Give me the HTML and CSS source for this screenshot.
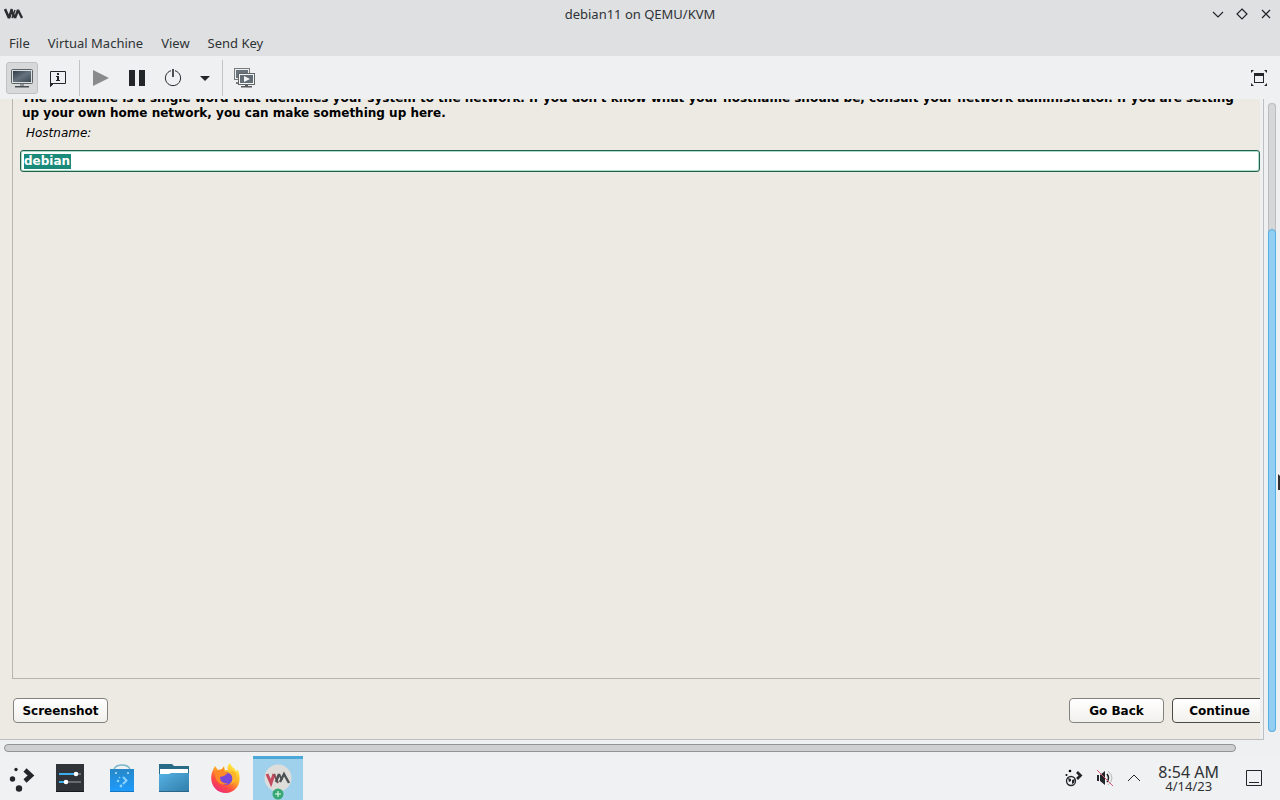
FILE: index.html
```html
<!DOCTYPE html>
<html lang="en">
<head>
<meta charset="utf-8">
<title>debian11 on QEMU/KVM</title>
<link rel="stylesheet" href="styles.css">
</head>
<body>
<header class="titlebar">
  <svg class="app-mark" width="20" height="12" viewBox="0 0 20 12" fill="none" stroke="#2b2e31" stroke-linejoin="bevel"><path d="M1 1l4 9 3-9" stroke-width="2.600"/><path d="M7 2l4 8M11 10l3-8 4 8" stroke-width="2.400"/><path d="M8 10l3-8" stroke-width="1.500"/></svg>
  <h1 class="title">debian11 on QEMU/KVM</h1>
  <div class="window-controls">
    <button class="plain" aria-label="Minimize"><svg width="12" height="12" viewBox="0 0 12 12"><path d="M1 4l5 5 5-5"/></svg></button>
    <button class="plain" aria-label="Maximize"><svg width="12" height="12" viewBox="0 0 12 12"><path d="M6 1l5 5-5 5-5-5z"/></svg></button>
    <button class="plain" aria-label="Close"><svg width="12" height="12" viewBox="0 0 12 12"><path d="M2 2l8 8M10 2l-8 8"/></svg></button>
  </div>
</header>
<nav class="menubar">
  <button class="plain">File</button>
  <button class="plain">Virtual Machine</button>
  <button class="plain">View</button>
  <button class="plain">Send Key</button>
</nav>
<div class="toolbar">
  <button class="tool active" aria-label="Console">
    <svg width="24" height="24" viewBox="0 0 24 24"><defs><linearGradient id="scr" x1="0" y1="0" x2="1" y2="1"><stop offset="0" stop-color="#303c48"/><stop offset=".5" stop-color="#66727e"/><stop offset="1" stop-color="#3c4a56"/></linearGradient></defs><rect x="1.500" y="3.500" width="21" height="14" rx="1" fill="#dde0e1" stroke="#5d6265"/><rect x="3" y="5" width="18" height="11" fill="url(#scr)"/><path d="M10 18h4v2h-4z" fill="#90969a"/><path d="M5 20h14v1.500H5z" fill="#4b5054"/></svg>
  </button>
  <button class="tool" aria-label="Details">
    <svg width="24" height="24" viewBox="0 0 24 24"><path d="M4.500 5.500h15v12h-12l-3 3z" fill="none" stroke="#232629"/><path d="M4 17h4l-4 4z" fill="#232629"/><path d="M11 7h2v2h-2zM10 10h3v4h1v1h-4v-1h1v-3h-1z" fill="#232629"/></svg>
  </button>
  <span class="divider"></span>
  <button class="tool" aria-label="Run"><svg width="24" height="24" viewBox="0 0 24 24"><path d="M4 4l16 8-16 8z" fill="#888a8c"/></svg></button>
  <button class="tool" aria-label="Pause"><svg width="24" height="24" viewBox="0 0 24 24"><path d="M4 4h6v16H4zM14 4h6v16h-6z" fill="#232629"/></svg></button>
  <button class="tool" aria-label="Shut down"><svg width="24" height="24" viewBox="0 0 24 24" fill="none" stroke="#232629"><path d="M10 4.700a7.600 7.600 0 1 0 4 0"/><path d="M12 3v8" stroke-width="1.600"/></svg></button>
  <button class="tool narrow" aria-label="Shut down options"><svg width="24" height="24" viewBox="0 0 24 24"><path d="M7 10h10l-5 5z" fill="#232629"/></svg></button>
  <span class="divider"></span>
  <button class="tool" aria-label="Snapshots">
    <svg width="24" height="24" viewBox="0 0 24 24"><rect x="2.500" y="2.500" width="15" height="11" fill="#eee" stroke="#777b7e"/><path d="M4 4h12v8H4z" fill="#69737b"/><path d="M4 16h5v2H4z" fill="#777"/><rect x="6.500" y="7.500" width="16" height="11" fill="#f4f4f4" stroke="#606568"/><path d="M8 9h13v8H8z" fill="#626d75"/><path d="M12 10l6 3-6 3z" fill="#f4f4f4"/><path d="M13 19h3v1h4v1.500H9V20h4z" fill="#55595c"/></svg>
  </button>
  <button class="tool fullscreen" aria-label="Full screen">
    <svg width="16" height="16" viewBox="0 0 16 16"><path d="M0 0h3L0 3zM13 0h3v3zM0 13v3h3zM16 13v3h-3zM3 3h10v10H3zM4 6v6h8V6z" fill="#232629" fill-rule="evenodd"/></svg>
  </button>
</div>
<main class="viewer">
  <section class="display">
    <form class="guest">
      <div class="question">
        <p class="description">The hostname is a single word that identifies your system to the network. If you don't know what your hostname should be, consult your network administrator. If you are setting up your own home network, you can make something up here.</p>
        <label class="field-label" for="hostname">Hostname:</label>
        <div class="entry"><input id="hostname" type="text" value="debian" size="5" autocomplete="off"></div>
      </div>
      <div class="actions">
        <button type="button" class="gtk-button">Screenshot</button>
        <button type="button" class="gtk-button back">Go Back</button>
        <button type="button" class="gtk-button default">Continue</button>
      </div>
    </form>
  </section>
  <div class="scroll-v"><div class="track"><div class="thumb"></div></div></div>
  <div class="scroll-h"><div class="thumb-h"></div></div>
  <svg class="pointer" width="2" height="16" viewBox="0 0 2 16"><path d="M0 0l2 2v14H0z" fill="#303030"/></svg>
</main>
<footer class="taskbar">
  <button class="launcher" aria-label="Application launcher"><svg width="32" height="32" viewBox="0 0 32 32" fill="#232629"><circle cx="10" cy="7.500" r="1.700"/><circle cx="6.500" cy="17" r="2.700"/><circle cx="13" cy="26.500" r="3.200"/><path d="M19 8l6 5.500-6 5.500" fill="none" stroke="#232629" stroke-width="4.500"/></svg></button>
  <button class="launcher" aria-label="System settings"><svg width="32" height="32" viewBox="0 0 32 32"><path d="M2 2h28v28H2z" fill="#303438"/><path d="M2 29h28v1H2z" fill="#17191b"/><path d="M5 12h22M5 20h22" stroke="#686c70" stroke-width="2"/><path d="M5 12h17M5 20h7" stroke="#3daee9" stroke-width="2"/><circle cx="22" cy="12" r="2.300" fill="#fff"/><circle cx="12" cy="20" r="2.300" fill="#fff"/></svg></button>
  <button class="launcher" aria-label="Software center"><svg width="32" height="32" viewBox="0 0 32 32"><defs><linearGradient id="bag" x1="0" y1="0" x2="0" y2="1"><stop offset="0" stop-color="#2688c8"/><stop offset="1" stop-color="#1d9cff"/></linearGradient></defs><path d="M4 7h24v23H4z" fill="url(#bag)"/><path d="M8 7q2-4 8-4t8 4" fill="none" stroke="#7bb7c9" stroke-width="1.500"/><circle cx="10" cy="11" r="1" fill="#b9e2ff"/><circle cx="22" cy="11" r="1" fill="#b9e2ff"/><g fill="#8bd3ff"><circle cx="13.500" cy="15.500" r=".8"/><circle cx="12" cy="19" r="1.300"/><circle cx="15" cy="24" r="1.400"/><path d="M17 15l3.500 3.500L17 22" fill="none" stroke="#8bd3ff" stroke-width="2"/></g><path d="M4 29h24v1H4z" fill="#1677bf"/></svg></button>
  <button class="launcher" aria-label="File manager"><svg width="32" height="32" viewBox="0 0 32 32"><defs><linearGradient id="fold" x1="0" y1="0" x2="1" y2="1"><stop offset="0" stop-color="#55b2e5"/><stop offset="1" stop-color="#317da8"/></linearGradient></defs><path d="M1 2h13l2 2h15v13H1z" fill="#286b87"/><path d="M2 7h28v9H2z" fill="#fff"/><path d="M1 12h10l2-1h18v19H1z" fill="url(#fold)"/><path d="M1 29h30v1H1z" fill="#2b6688"/></svg></button>
  <button class="launcher" aria-label="Firefox"><svg width="32" height="32" viewBox="0 0 32 32"><defs><linearGradient id="fox" x1=".85" y1=".1" x2=".25" y2="1"><stop offset="0" stop-color="#fff044"/><stop offset=".4" stop-color="#ffab25"/><stop offset=".7" stop-color="#ff4b42"/><stop offset="1" stop-color="#e92980"/></linearGradient></defs><path d="M3 8l2-4 3 4 4-1 2-3 1 4h3c-1-3 0-5 2-7 1 4 5 5 6 8l2-1c5 13-2 23-12 23C4 31-2 19 3 8z" fill="url(#fox)"/><circle cx="16" cy="16.500" r="6.500" fill="#7848d9"/><path d="M5 9l6-1 3-3v4l4 2-4 3-4 1c0 5 4 7 8 6-8 5-14-3-13-12z" fill="#ff8829"/><path d="M17 11c7 0 7 8 3 11 9-2 8-10 3-13" fill="#ffb52b"/></svg></button>
  <button class="launcher running" aria-label="Virtual Machine Manager">
    <svg width="32" height="32" viewBox="0 0 32 32"><circle cx="16" cy="16" r="13.500" fill="#deddda"/><g fill="none"><path d="M5 12l4 9 3-9" stroke="#c54b60" stroke-width="3"/><path d="M12 12l4 9" stroke="#8b4b54" stroke-width="2"/><path d="M14 20l3-8M18 20l4-8 5 9" stroke="#4d5052" stroke-width="2.400"/><path d="M17 12l3 6" stroke="#4d5052" stroke-width="2"/></g></svg>
    <svg class="badge" width="12" height="12" viewBox="0 0 12 12"><circle cx="6" cy="6" r="5.500" fill="#37a873"/><path d="M6 3v6M3 6h6" stroke="#eafff3"/></svg>
  </button>
  <div class="tray">
    <button class="plain" aria-label="Keyboard and desktop"><svg width="18" height="18" viewBox="0 0 18 18"><circle cx="6" cy="12" r="4.500" fill="none" stroke="#232629" stroke-width="1.300"/><path d="M3 9l3 1v2l-2 1zM7 11l3-1-1 4-2 1z" fill="#232629"/><circle cx="5" cy="2" r="1.300"/><circle cx="1.500" cy="6" r="1"/><path d="M12 3l3.500 3.500L12 10" fill="none" stroke="#232629" stroke-width="2.800"/></svg></button>
    <button class="plain" aria-label="Muted"><svg width="18" height="18" viewBox="0 0 18 18"><path d="M1 6h2v6H1zM4 6l5-4v14l-5-4z" fill="#232629"/><path d="M11 5q3 4 0 8" fill="none" stroke="#232629" stroke-width="1.500"/><path d="M12 2q8 7 0 14" fill="none" stroke="#b5b8ba"/><path d="M1 1l16 16" stroke="#d25870"/></svg></button>
    <button class="plain" aria-label="Show hidden icons"><svg width="14" height="14" viewBox="0 0 14 14"><path d="M1 10l6-6 6 6" fill="none" stroke="#232629"/></svg></button>
    <div class="clock"><time class="time">8:54 AM</time><time class="date">4/14/23</time></div>
    <button class="plain" aria-label="Show desktop"><svg width="18" height="18" viewBox="0 0 18 18"><path d="M1.500 1.500h15v15h-15zM4 13.500h10" fill="none" stroke="#232629"/></svg></button>
  </div>
</footer>
</body>
</html>
```
FILE: styles.css
```css
* { box-sizing: border-box; }

body {
  margin: 0;
  height: 100vh;
  display: flex;
  flex-direction: column;
  overflow: hidden;
  background: #eff0f1;
  color: #2f3235;
  font: 13px/20px "Noto Sans", sans-serif;
}

button { font: inherit; color: inherit; cursor: pointer; }
svg { display: block; flex: none; }
.plain { border: 0; padding: 0; background: none; }

.titlebar {
  display: grid;
  grid-template-columns: 1fr auto 1fr;
  align-items: center;
  height: 28px;
  padding: 0 8px;
  background: #dee0e2;
}
.app-mark { margin-left: -4px; }
.title { margin: 0; font-size: 13px; font-weight: 400; }
.window-controls { display: flex; justify-content: flex-end; gap: 12px; }
.window-controls svg { fill: none; stroke: #232629; stroke-width: 1.2; }

.menubar {
  display: flex;
  align-items: center;
  gap: 18px;
  height: 28px;
  padding: 2px 9px 0;
  background: #dee0e2;
}

.toolbar {
  display: flex;
  align-items: center;
  gap: 4px;
  height: 43px;
  padding: 0 5px 0 6px;
  background: #eff0f2;
}
.tool {
  display: flex;
  align-items: center;
  justify-content: center;
  width: 32px;
  height: 32px;
  padding: 0;
  border: 1px solid transparent;
  border-radius: 3px;
  background: none;
}
.tool.active { background: #d6d8da; border-color: #bfc1c3; }
.tool.narrow { width: 24px; }
.divider { width: 1px; height: 36px; margin: 0 1px; background: #c1c3c5; }
.fullscreen { margin-left: auto; }

.viewer {
  position: relative;
  flex: 1;
  min-height: 0;
  display: grid;
  grid-template-columns: minmax(0, 1fr) 16px;
  grid-template-rows: minmax(0, 1fr) 16px;
}
.display {
  min-height: 0;
  padding-right: 3px;
  border-right: 1px solid #bcbec0;
  border-bottom: 1px solid #bcbec0;
}
.guest {
  display: flex;
  flex-direction: column;
  height: 100%;
  overflow: hidden;
  background: #edeae4;
  color: #000;
  font: bold 12px/15px "DejaVu Sans", sans-serif;
}
.question {
  flex: 1;
  min-height: 0;
  margin-left: 12px;
  padding-left: 7px;
  border-left: 1px solid #b7b5b0;
  border-bottom: 1px solid #b7b5b0;
}
.description { margin: -8px 0 0; padding: 0 16px 0 2px; }
.field-label {
  display: block;
  padding: 5px 6px 9px;
  font-weight: 400;
  font-style: italic;
}
.entry {
  display: flex;
  align-items: center;
  height: 22px;
  padding: 1px 3px 0;
  border: 1px solid #23604d;
  border-radius: 3px;
  background: #fff;
  box-shadow: inset 0 0 0 1px #a9ddc9;
}
.entry input {
  width: 47px;
  height: 15px;
  padding: 0;
  border: 0;
  outline: 0;
  background: #1a8b7b;
  color: #fff;
  font: inherit;
}
.actions {
  display: flex;
  gap: 8px;
  padding: 19px 0 16px 13px;
  margin-right: -7px;
}
.gtk-button {
  flex: none;
  width: 95px;
  height: 25px;
  padding: 1px 0 0;
  border: 1px solid #85837f;
  border-radius: 4px;
  background: linear-gradient(#fff, #f2f0ec);
}
.gtk-button.back { margin-left: auto; }
.gtk-button.default { border-color: #4c4a47; }

.scroll-v { padding: 4px 4px 8px; }
.track {
  display: flex;
  flex-direction: column;
  justify-content: flex-end;
  height: 100%;
  border-radius: 4px;
  background: #d5d7d9;
  box-shadow: inset 0 0 0 1px #babcbe;
}
.thumb { height: 80%; border: 1px solid #52b0e0; border-radius: 4px; background: #93cef5; }
.scroll-h { grid-column: 1 / -1; padding: 4px 44px 4px 4px; }
.thumb-h { height: 8px; border: 1px solid #929496; border-radius: 4px; background: #cdcfd1; }
.pointer { position: absolute; right: 0; top: 375px; }

.taskbar { display: flex; height: 44px; padding-left: 1px; background: #eff1f2; }
.launcher {
  position: relative;
  display: flex;
  align-items: center;
  justify-content: center;
  width: 50px;
  height: 44px;
  margin-right: 2px;
  padding: 0;
  border: 0;
  background: none;
}
.launcher:first-child { width: 42px; }
.launcher.running { background: #9fd1ed; box-shadow: inset 0 3px #4ba8d9; }
.badge { position: absolute; bottom: 0; left: 19px; }
.tray { display: flex; align-items: center; gap: 13px; margin-left: auto; padding-right: 17px; }
.clock { display: flex; flex-direction: column; align-items: center; margin: 0 13px 0 4px; }
.time { font-size: 16px; line-height: 16px; }
.date { font-size: 13px; line-height: 12px; }
```
